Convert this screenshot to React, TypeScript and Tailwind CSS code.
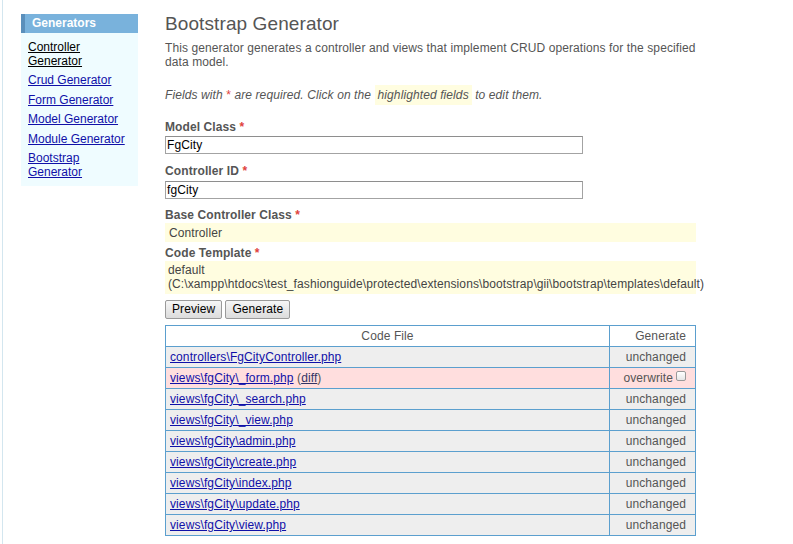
import React from "react";

const files = [
  { name: "controllers\\FgCityController.php", status: "unchanged" },
  { name: "views\\fgCity\\_form.php", status: "overwrite" },
  { name: "views\\fgCity\\_search.php", status: "unchanged" },
  { name: "views\\fgCity\\_view.php", status: "unchanged" },
  { name: "views\\fgCity\\admin.php", status: "unchanged" },
  { name: "views\\fgCity\\create.php", status: "unchanged" },
  { name: "views\\fgCity\\index.php", status: "unchanged" },
  { name: "views\\fgCity\\update.php", status: "unchanged" },
  { name: "views\\fgCity\\view.php", status: "unchanged" },
];

const links = [
  { label: "Controller Generator", active: true },
  { label: "Crud Generator" },
  { label: "Form Generator" },
  { label: "Model Generator" },
  { label: "Module Generator" },
  { label: "Bootstrap Generator" },
];

function Req() {
  return <span className="text-[#e0433c] font-bold"> *</span>;
}

export default function App() {
  return (
    <div className="pl-[2px] bg-white" style={{ fontFamily: '"Liberation Sans", Arial, sans-serif' }}>
      <div className="border-l border-[#d3e6ef] min-h-[544px] flex items-start text-[12px] text-[#555] tracking-[0.1px]">
        <div className="ml-[18px] mt-[14px] w-[117px] bg-[#effcff]">
          <div className="h-[19px] bg-[#79b2dc] border-l-[4px] border-[#5a8fbb] pl-[7px] text-white font-bold leading-[19px] text-[12px] tracking-normal">
            Generators
          </div>
          <ul className="pl-[7px] pr-[8px] pt-[7px] pb-[7px] tracking-normal">
            {links.map((l, i) => (
              <li key={i} className={`leading-[14px] ${i < links.length - 1 ? "mb-[5.4px]" : ""}`}>
                <a className={`underline ${l.active ? "text-black" : "text-[#1010a8]"}`}>{l.label}</a>
              </li>
            ))}
          </ul>
        </div>
        <div className="ml-[27px] w-[531px]">
          <h1 className="mt-[13px] text-[19px] leading-[22px] text-[#555] tracking-[0.1px]">Bootstrap Generator</h1>
          <p className="mt-[6px] w-[545px] leading-[14px] text-[#555]">
            This generator generates a controller and views that implement CRUD operations for the specified data model.
          </p>
          <p className="mt-[19px] leading-[14px] italic text-[#555]">
            Fields with <span className="text-[#e0433c] not-italic">*</span> are required. Click on the{" "}
            <span className="bg-[#fffde0] px-[3px] py-[3px]">highlighted fields</span> to edit them.
          </p>

          <div className="mt-[18px] leading-[14px] font-bold text-[#555]">
            Model Class<Req />
          </div>
          <div className="mt-[2px] w-[418px] h-[18px] border border-[#a3a3a3] border-t-[#8e8e8e] pl-[1px] leading-[16px] text-black">
            FgCity
          </div>

          <div className="mt-[10px] leading-[14px] font-bold text-[#555]">
            Controller ID<Req />
          </div>
          <div className="mt-[3px] w-[418px] h-[18px] border border-[#a3a3a3] border-t-[#8e8e8e] pl-[1px] leading-[16px] text-black">
            fgCity
          </div>

          <div className="mt-[9px] leading-[14px] font-bold text-[#555]">
            Base Controller Class<Req />
          </div>
          <div className="mt-[1px] h-[19px] bg-[#fffde0] pl-[4px] pt-[3px] leading-[14px] text-[#444]">Controller</div>

          <div className="mt-[4px] leading-[14px] font-bold text-[#555]">
            Code Template<Req />
          </div>
          <div className="mt-[1px] h-[33px] bg-[#fffde0] pl-[3px] pt-[2px] leading-[14px] text-[#444] whitespace-nowrap">
            default
            <br />
            (C:\xampp\htdocs\test_fashionguide\protected\extensions\bootstrap\gii\bootstrap\templates\default)
          </div>

          <div className="mt-[6px] flex gap-[3px]">
            <button className="h-[19px] px-[6px] border border-[#9a9a9a] rounded-[2px] bg-gradient-to-b from-[#f6f6f6] to-[#dcdcdc] text-black text-[12px] leading-[17px] tracking-[0.1px]">
              Preview
            </button>
            <button className="h-[19px] px-[6px] border border-[#9a9a9a] rounded-[2px] bg-gradient-to-b from-[#f6f6f6] to-[#dcdcdc] text-black text-[12px] leading-[17px] tracking-[0.1px]">
              Generate
            </button>
          </div>

          <table className="mt-[6px] w-[531px] border-collapse border border-[#5b9fce]">
            <thead>
              <tr className="h-[21px] bg-white">
                <th className="border border-[#5b9fce] font-normal text-center text-[#555] leading-[14px]">Code File</th>
                <th className="w-[86px] border border-[#5b9fce] font-normal text-right pr-[9px] text-[#555] leading-[14px]">
                  Generate
                </th>
              </tr>
            </thead>
            <tbody>
              {files.map((f, i) => {
                const ow = f.status === "overwrite";
                return (
                  <tr key={i} className={`h-[21px] ${ow ? "bg-[#ffdede]" : "bg-[#eeeeee]"}`}>
                    <td className="border border-[#5b9fce] pl-[4px] leading-[14px]">
                      <a className="underline text-[#1010a8]">{f.name}</a>
                      {ow && (
                        <span className="text-[#555]">
                          {" "}(<a className="underline text-[#333366]">diff</a>)
                        </span>
                      )}
                    </td>
                    <td className="border border-[#5b9fce] text-right pr-[9px] leading-[14px] text-[#555]">
                      {ow ? (
                        <span className="inline-flex items-center">
                          overwrite
                          <span className="ml-[3px] inline-block w-[10px] h-[10px] rounded-[2px] border border-[#999] bg-gradient-to-b from-white to-[#e6e6e6] relative top-[-2px]"></span>
                        </span>
                      ) : (
                        f.status
                      )}
                    </td>
                  </tr>
                );
              })}
            </tbody>
          </table>
        </div>
      </div>
    </div>
  );
}
